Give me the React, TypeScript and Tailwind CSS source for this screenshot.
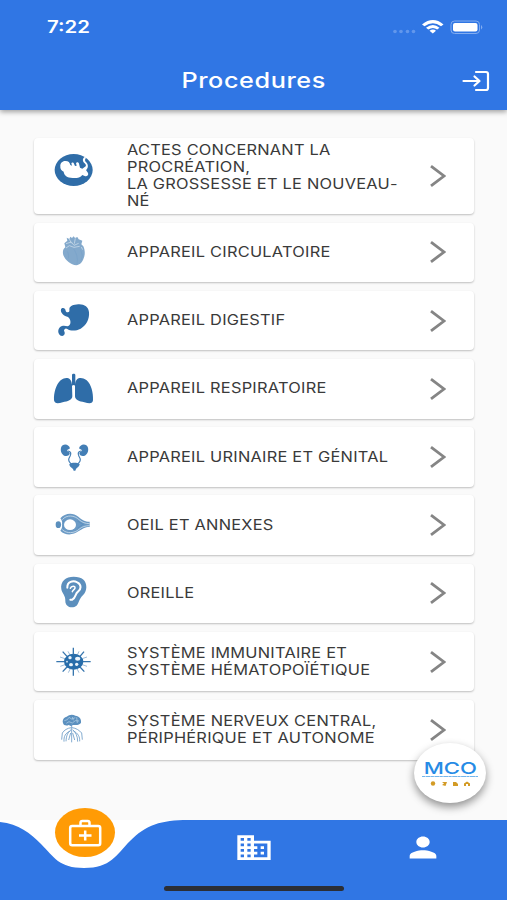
import type { ReactNode } from 'react';

const BLUE = '#2f6da8';

function Icon({ box, children }: { box: string; children: ReactNode }) {
  return (
    <svg viewBox={box} className="h-10 w-12 shrink-0 overflow-visible" fill={BLUE}>
      {children}
    </svg>
  );
}

const baby = (
  <Icon box="60 78 144 120">
    <ellipse cx="131" cy="120" rx="57" ry="48" />
    <path
      fill="#fff"
      d="M91 109C90 99 98 92 107 93C115 93 120 98 121 105L126 107L124 100C125 96 131 97 132 101L135 108L140 107L138 99C141 95 146 96 147 101L150 113L157 116L163 112C171 107 168 103 162 98C156 91 159 83 165 80L168 83C163 89 165 94 170 98C176 105 174 115 168 120L174 129C177 136 170 141 164 138L157 135C151 143 140 145 128 144C111 143 102 136 101 125C94 122 90 116 91 109Z"
    />
  </Icon>
);

const heart = (
  <Icon box="30 24 144 120">
    <path
      fill="#83a9cc"
      d="M73 58L82 50L80 41L88 45L91 38L96 42L101 37L105 42L112 39L116 46L127 50L124 61L130 67C135 77 136 91 131 103C127 115 119 123 109 124C93 123 76 109 70 94C67 83 69 75 76 70Z"
    />
    <path fill="none" stroke="#c7d9e8" strokeWidth="2.5" d="M78 59L94 54L102 64L116 58M78 72L88 65L102 70L119 67M88 45L94 58M106 43L103 59M124 69L128 77" />
    <path fill="none" stroke="#739fc8" strokeWidth="1.5" d="M82 82C86 90 87 98 85 103M101 75C109 86 114 102 111 119M121 79C128 89 128 99 123 109" />
  </Icon>
);

const stomach = (
  <Icon box="30 229 144 120">
    <path
      d="M63 254C65 249 72 249 75 253C78 258 76 262 83 263C88 263 89 259 88 253C89 244 100 240 115 239C132 238 146 246 147 263C149 284 138 303 122 312C107 320 91 319 82 313C77 309 73 313 72 318C74 322 76 326 72 331C68 336 60 334 57 328C52 319 56 307 66 304C77 301 82 308 88 302C93 297 93 284 84 277C73 275 60 265 63 254Z"
    />
  </Icon>
);

const lungs = (
  <Icon box="30 28 144 120">
    <path d="M96 46C96 41 106 41 106 46V72C113 76 109 80 101 76C94 80 89 77 96 72Z" />
    <path d="M82 55C91 56 96 66 96 78L97 110C97 121 83 125 68 128C54 132 44 133 42 122C41 99 48 75 62 62C70 56 76 54 82 55Z" />
    <path d="M119 55C110 56 105 66 105 78L105 110C105 121 118 125 133 128C148 132 158 133 159 122C160 99 154 75 140 62C132 56 125 54 119 55Z" />
  </Icon>
);

const kidneys = (
  <Icon box="30 233 144 120">
    <g fill="#437eb5">
      <path d="M85 259C78 253 66 255 63 265C60 278 68 290 79 290C88 290 92 281 87 278C80 276 80 270 88 269C91 266 89 262 85 259Z" />
      <path d="M122 259C129 253 141 255 144 265C147 278 139 290 128 290C119 290 116 281 120 278C127 276 127 270 119 269C116 266 118 262 122 259Z" />
      <path d="M88 314C96 309 111 309 119 314C118 323 111 325 108 329L106 334H101L99 329C95 325 88 323 88 314Z" />
      <path fill="none" stroke="#437eb5" strokeWidth="3.5" d="M84 275C98 277 91 290 87 297C84 304 88 309 94 314M123 275C109 277 116 290 120 297C123 304 119 309 113 314" />
    </g>
  </Icon>
);

const eye = (
  <Icon box="30 32 144 120">
    <ellipse cx="55" cy="91" rx="8" ry="10" fill="#5b8fbd" />
    <path fill="#6b9ac5" d="M61 72C75 55 99 54 115 67C127 77 134 82 149 82V98C134 98 127 104 115 111C99 123 75 124 61 109C69 101 69 80 61 72Z" />
    <ellipse cx="90" cy="91" rx="18" ry="16" fill="#fff" />
    <path fill="none" stroke="#c9dcea" strokeWidth="2.5" d="M67 76C80 60 104 63 117 76C126 84 136 88 149 88M67 106C80 119 104 117 117 105C126 97 136 94 149 94" />
    <path fill="none" stroke="#558bbc" strokeWidth="2" d="M71 79Q63 90 71 103M112 80L130 90L112 102" />
  </Icon>
);

const ear = (
  <Icon box="30 237 144 120">
    <path fill="#5c8fbd" d="M64 286C60 261 78 248 101 248C126 248 140 260 139 280C138 298 129 303 122 312C115 321 116 335 103 339C88 343 76 335 76 321C77 304 66 299 64 286Z" />
    <path fill="none" stroke="#fff" strokeWidth="6" strokeLinecap="round" d="M82 281C81 263 99 258 112 265C126 272 123 287 114 293C105 299 108 311 97 317L91 317" />
    <path fill="none" stroke="#fff" strokeWidth="4.5" strokeLinecap="round" d="M91 283C94 274 106 275 105 282C104 287 98 288 97 293" />
  </Icon>
);

const virus = (
  <Icon box="30 37 144 120">
    <ellipse cx="101" cy="96" rx="29" ry="24" fill="#286daa" />
    <path fill="none" stroke="#3776ae" strokeWidth="4" d="M49 96H72M129 96H152M100 54V75M100 117V138M68 66L81 80M132 66L120 80M68 126L81 112M133 126L120 112" />
    <path fill="none" stroke="#6e9cc5" strokeWidth="2" d="M84 65L90 76M117 65L112 76M60 82L75 87M141 82L126 87M61 110L75 105M141 110L127 105M85 129L91 117M117 129L111 117" />
    <g fill="#edf5fc">
      <circle cx="90" cy="84" r="5" />
      <ellipse cx="113" cy="87" rx="8" ry="6" />
      <ellipse cx="93" cy="105" rx="6" ry="5" />
      <circle cx="110" cy="104" r="5" />
      <circle cx="81" cy="96" r="2.500" />
    </g>
  </Icon>
);

const nerves = (
  <Icon box="30 241 144 120">
    <path fill="#5b90bf" d="M69 280C66 270 73 262 80 261C87 254 99 253 106 258C118 259 125 268 123 279C117 288 107 285 98 286L94 290L86 286C80 289 71 288 69 280Z" />
    <path fill="none" stroke="#b8d3e8" strokeWidth="2" d="M73 273L82 270L87 263L95 268L106 264M79 281L87 276L97 280L106 273L117 274M97 262L100 272M110 263L112 280" />
    <path fill="none" stroke="#6b9bc7" strokeWidth="2.500" d="M95 283V338M94 294C82 295 72 302 67 310L65 330M96 294C108 295 118 302 125 310L127 330M93 300C84 308 79 316 78 335M98 300C107 308 113 319 113 336M91 304C76 310 71 320 72 336M100 304C114 310 120 322 119 335M92 310L86 331M98 310L104 331" />
  </Icon>
);

type Row = { icon: ReactNode; lines: string[]; tall?: boolean };

const rows: Row[] = [
  { icon: baby, lines: ['ACTES CONCERNANT LA', 'PROCRÉATION,', 'LA GROSSESSE ET LE NOUVEAU-', 'NÉ'], tall: true },
  { icon: heart, lines: ['APPAREIL CIRCULATOIRE'] },
  { icon: stomach, lines: ['APPAREIL DIGESTIF'] },
  { icon: lungs, lines: ['APPAREIL RESPIRATOIRE'] },
  { icon: kidneys, lines: ['APPAREIL URINAIRE ET GÉNITAL'] },
  { icon: eye, lines: ['OEIL ET ANNEXES'] },
  { icon: ear, lines: ['OREILLE'] },
  { icon: virus, lines: ['SYSTÈME IMMUNITAIRE ET', 'SYSTÈME HÉMATOPOÏÉTIQUE'] },
  { icon: nerves, lines: ['SYSTÈME NERVEUX CENTRAL,', 'PÉRIPHÉRIQUE ET AUTONOME'] },
];

function Card({ icon, lines, tall }: Row) {
  return (
    <li
      className={`flex items-center rounded-[4px] bg-white pl-[16px] pr-[28px] shadow-[0_1px_2px_rgba(0,0,0,0.24)] ${
        tall ? 'h-[76.5px]' : 'h-[59.5px]'
      }`}
    >
      {icon}
      <div className="ml-[29px] flex-1 origin-left scale-x-[1.17] whitespace-nowrap pb-[2px] text-[14px] leading-[17px] tracking-[0.2px] text-[#3a3a3a]">
        {lines.map((line) => (
          <div key={line}>{line}</div>
        ))}
      </div>
      <svg viewBox="0 0 16 22" className="h-[22px] w-4 shrink-0" fill="none" stroke="#858585" strokeWidth="2.8">
        <path d="M1 1.2L14 11L1 20.8" />
      </svg>
    </li>
  );
}

function Header() {
  return (
    <header className="relative z-10 h-[110px] bg-[#3076e4] text-white shadow-[0_2px_5px_rgba(0,0,0,0.36)]">
      <div className="flex h-[54px] items-center justify-between pl-[47px] pr-[24px]">
        <span className="origin-left scale-x-[1.2] pt-[2px] text-[17px] font-semibold">7:22</span>
        <svg viewBox="0 0 92 20" className="h-5 w-[92px]" fill="#fff">
          <g fill="#6297ec">
            <circle cx="4" cy="14.5" r="1.800" />
            <circle cx="10" cy="14.5" r="1.800" />
            <circle cx="16.500" cy="14.5" r="1.800" />
            <circle cx="22.500" cy="14.5" r="1.800" />
          </g>
          <path d="M31 7.400Q42 -1.500 52.500 7.400L50 9.300Q42 3.200 33.500 9.300Z" />
          <path d="M35 10.700Q42 5.300 48.500 10.700L46.200 12.500Q42 9.500 37.300 12.500Z" />
          <path d="M38.500 13.700Q42 11.300 45 13.700L41.800 16.500Z" />
          <rect x="60" y="4" width="28.500" height="12.500" rx="3.500" fill="none" stroke="#83adf0" />
          <rect x="62" y="6" width="24.500" height="8.500" rx="2" />
          <path d="M90 8Q92.500 10.200 90 12.500Z" fill="#83adf0" />
        </svg>
      </div>
      <div className="grid h-[54px] grid-cols-[1fr_auto_1fr] items-center pr-[17px]">
        <span />
        <h1 className="scale-x-[1.2] pb-px pl-[15px] text-[21px] font-medium tracking-[0.5px]">Procedures</h1>
        <svg
          viewBox="0 0 28 22"
          className="h-[22px] w-7 justify-self-end"
          fill="none"
          stroke="#fff"
          strokeWidth="2.200"
          strokeLinecap="round"
          strokeLinejoin="round"
        >
          <path d="M1.500 11H17M12.500 6.500L17.500 11L12.500 15.500M14 2H24Q26 2 26 4V18Q26 20 24 20H14" />
        </svg>
      </div>
    </header>
  );
}

function TabBar() {
  return (
    <nav className="relative h-[80px] bg-white">
      <svg viewBox="0 0 507 80" className="absolute inset-0 h-[80px] w-full" fill="#3076e4">
        <path d="M0 2C19 4 30 13 41 24C54 37 59 48 84 48C111 48 116 35 130 21C146 5 161 0 188 0H507V80H0Z" />
      </svg>
      <div className="absolute -top-[12px] left-[55px] flex h-[49px] w-[60px] items-center justify-center rounded-[50%] bg-[#ff9b05]">
        <svg viewBox="0 0 34 28" className="h-7 w-[34px]" fill="none" stroke="#fff" strokeWidth="2.500">
          <rect x="2.200" y="7" width="30" height="19.200" rx="2" />
          <path d="M12.500 7V3.800Q12.500 2 14.300 2H19.700Q21.500 2 21.500 3.800V7M11 16.500H23.500M17.200 11.500V21.500" />
        </svg>
      </div>
      <div className="relative grid h-[54px] grid-cols-3 items-center justify-items-center text-white">
        <span />
        <svg viewBox="0 0 24 24" preserveAspectRatio="none" className="h-[33px] w-10" fill="currentColor">
          <path d="M12 7V3H2v18h20V7H12zM6 19H4v-2h2v2zm0-4H4v-2h2v2zm0-4H4V9h2v2zm0-4H4V5h2v2zm4 12H8v-2h2v2zm0-4H8v-2h2v2zm0-4H8V9h2v2zm0-4H8V5h2v2zm10 12h-8v-2h2v-2h-2v-2h2v-2h-2V9h8v10zm-2-8h-2v2h2v-2zm0 4h-2v2h2v-2z" />
        </svg>
        <svg viewBox="0 0 24 24" preserveAspectRatio="none" className="h-[33px] w-10" fill="currentColor">
          <path d="M12 12c2.210 0 4-1.790 4-4s-1.790-4-4-4-4 1.790-4 4 1.790 4 4 4zm0 2c-2.670 0-8 1.340-8 4v2h16v-2c0-2.660-5.330-4-8-4z" />
        </svg>
      </div>
      <div className="relative mx-auto mt-[11.500px] h-[5.500px] w-[180px] rounded-full bg-[#2b2e35]" />
    </nav>
  );
}

function Fab() {
  return (
    <div className="absolute left-[414px] top-[743px] z-20 flex h-[60px] w-[72px] flex-col items-center rounded-[50%] bg-white pt-[18px] shadow-[0_4px_8px_rgba(0,0,0,0.42)]">
      <span className="scale-x-[1.380] text-[16px] font-medium leading-[15px] text-[#268be5]">MCO</span>
      <svg viewBox="0 0 56 14" className="h-[14px] w-14 shrink-0">
        <path d="M0 0.500H56" stroke="#75b6ec" strokeWidth="1.200" strokeDasharray="3 .5 5 .4" />
        <g fill="#d39b25">
          <circle cx="11" cy="7.500" r="2.200" />
          <path d="M20 6H25L23.500 10L20 9L22 7.500Z" />
          <path d="M31 6H34L36 8V10H31Z" />
          <path d="M42 10V7.500L45 5.500L48 7.500V10H46V8H44V10Z" />
        </g>
      </svg>
    </div>
  );
}

export default function App() {
  return (
    <div className="relative flex h-[900px] w-[507px] flex-col overflow-hidden bg-[#fafafa] font-['Inter','Liberation_Sans',sans-serif]">
      <Header />
      <main className="flex-1 pl-[33.500px] pr-[33px] pt-[27.500px]">
        <ul className="flex flex-col gap-[8.700px]">
          {rows.map((row) => (
            <Card key={row.lines[0]} {...row} />
          ))}
        </ul>
      </main>
      <TabBar />
      <Fab />
    </div>
  );
}
